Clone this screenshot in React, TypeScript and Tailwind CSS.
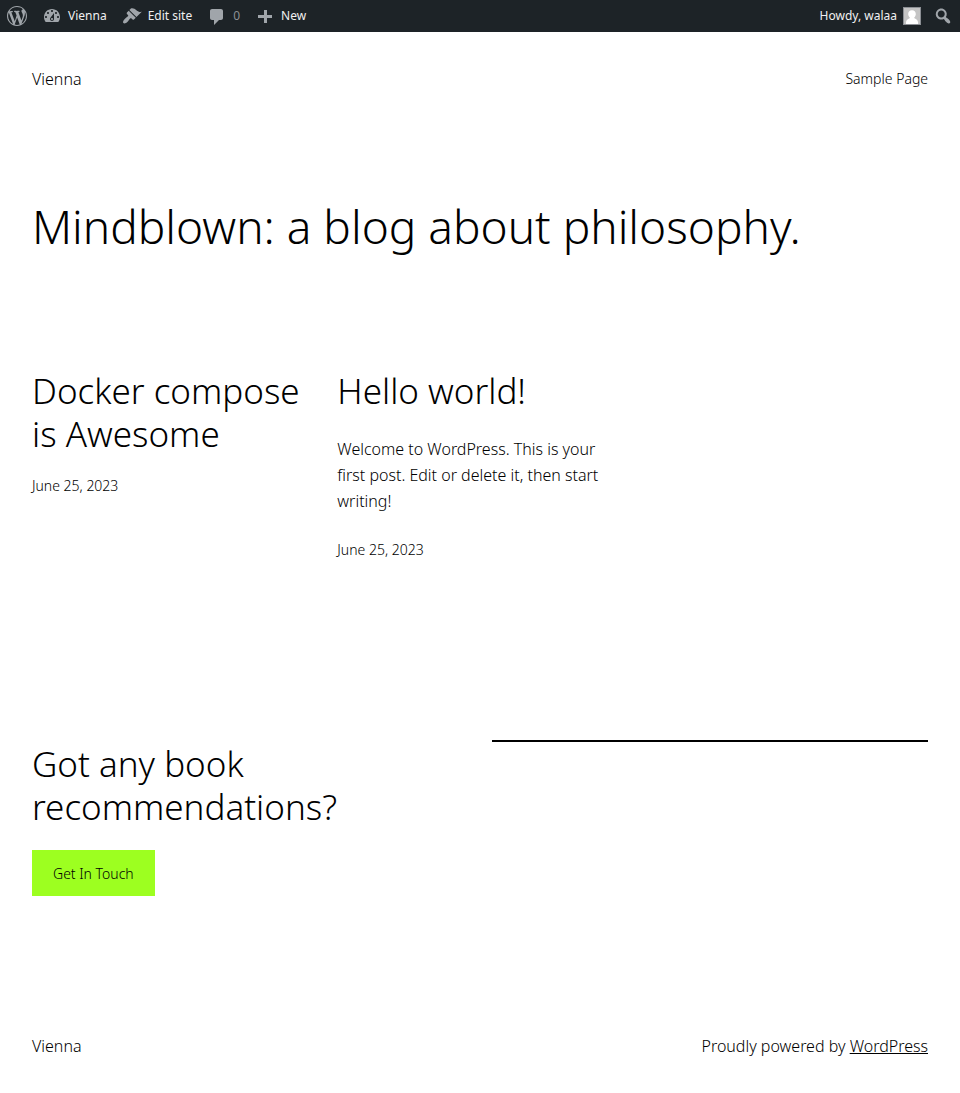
import type { ReactNode } from "react";

const icons = {
  wordpress:
    "M20 10c0-5.51-4.49-10-10-10C4.48 0 0 4.49 0 10c0 5.52 4.48 10 10 10 5.51 0 10-4.48 10-10zM7.78 15.37L4.37 6.22c.55-.02 1.17-.08 1.17-.08.5-.06.44-1.13-.06-1.11 0 0-1.45.11-2.37.11-.18 0-.37 0-.58-.01C4.12 2.69 6.87 1.11 10 1.11c2.33 0 4.45.87 6.05 2.34-.68-.11-1.65.39-1.65 1.58 0 .74.45 1.36.9 2.1.35.61.55 1.36.55 2.46 0 1.49-1.4 5-1.4 5l-3.03-8.37c.54-.02.82-.17.82-.17.5-.05.44-1.25-.06-1.22 0 0-1.44.12-2.38.12-.87 0-2.33-.12-2.33-.12-.5-.03-.56 1.2-.06 1.22l.92.08 1.26 3.41zM17.41 10c.24-.64.74-1.87.43-4.25.7 1.29 1.05 2.71 1.05 4.25 0 3.29-1.73 6.24-4.4 7.78.97-2.59 1.94-5.2 2.92-7.78zM6.1 18.09C3.12 16.65 1.11 13.53 1.11 10c0-1.3.23-2.48.72-3.59C3.25 10.3 4.67 14.2 6.1 18.09zm4.03-6.63l2.58 6.98c-.86.29-1.76.45-2.71.45-.79 0-1.57-.11-2.29-.33.81-2.38 1.62-4.74 2.42-7.1z",
  dashboard:
    "M3.76 16h12.48c1.1-1.37 1.76-3.11 1.76-5 0-4.42-3.58-8-8-8s-8 3.58-8 8c0 1.89.66 3.63 1.76 5zM10 4c.55 0 1 .45 1 1s-.45 1-1 1-1-.45-1-1 .45-1 1-1zM6 6c.55 0 1 .45 1 1s-.45 1-1 1-1-.45-1-1 .45-1 1-1zm8 0c.55 0 1 .45 1 1s-.45 1-1 1-1-.45-1-1 .45-1 1-1zm-5.37 5.55L12 7v6c0 1.1-.9 2-2 2s-2-.9-2-2c0-.57.24-1.08.63-1.45zM4 10c.55 0 1 .45 1 1s-.45 1-1 1-1-.45-1-1 .45-1 1-1zm12 0c.55 0 1 .45 1 1s-.45 1-1 1-1-.45-1-1 .45-1 1-1zm-5 3c0-.55-.45-1-1-1s-1 .45-1 1 .45 1 1 1 1-.45 1-1z",
  brush:
    "M14.48 11.06L7.41 3.99l1.5-1.5c.5-.56 2.3-.47 3.51.32 1.21.8 1.43 1.28 2.91 2.1 1.18.64 2.45 1.26 4.45.85zm-.71.71L6.7 4.7 4.93 6.47c-.39.39-.39 1.02 0 1.41l1.06 1.06c.39.39.39 1.03 0 1.42-.6.6-1.43 1.11-2.21 1.69-.35.26-.7.53-1.01.84C1.43 14.23.4 16.08 1.4 17.07c.99 1 2.84-.03 4.18-1.36.31-.31.58-.66.85-1.02.57-.78 1.08-1.61 1.69-2.21.39-.39 1.02-.39 1.41 0l1.06 1.06c.39.39 1.02.39 1.41 0z",
  comment:
    "M5 3h9c1.1 0 2 .9 2 2v7c0 1.1-.9 2-2 2h-2l-5 5v-5H5c-1.1 0-2-.9-2-2V5c0-1.1.9-2 2-2z",
  plus: "M17 9v3h-5v5H9v-5H3V9h6V4h3v5h5z",
  search:
    "M12.14 4.18c1.87 1.87 2.11 4.75.72 6.89.12.1.22.21.36.31.2.16.47.36.81.59.34.24.56.39.66.47.42.31.73.57.94.78.32.32.6.65.84 1 .25.35.44.69.59 1.04.14.35.21.68.18 1-.02.32-.14.59-.36.81s-.49.34-.81.36c-.31.02-.65-.04-.99-.19-.35-.14-.7-.34-1.04-.59-.35-.24-.68-.52-1-.84-.21-.21-.47-.52-.77-.93-.1-.13-.25-.35-.47-.66-.22-.32-.4-.57-.56-.78-.16-.2-.29-.35-.44-.5-2.07 1.09-4.69.76-6.44-.98-2.14-2.15-2.14-5.64 0-7.78 2.15-2.15 5.63-2.15 7.78 0zm-1.41 6.36c1.36-1.37 1.36-3.58 0-4.95-1.37-1.37-3.59-1.37-4.95 0-1.37 1.37-1.37 3.58 0 4.95 1.36 1.37 3.58 1.37 4.95 0z",
};

function Icon({ name }: { name: keyof typeof icons }) {
  return (
    <svg viewBox="0 0 20 20" className="size-5 shrink-0 fill-[#a0a5aa]" aria-hidden="true">
      <path d={icons[name]} />
    </svg>
  );
}

function BarLink({ icon, children }: { icon: keyof typeof icons; children: ReactNode }) {
  return (
    <a href="#" className="flex h-8 items-center gap-1.5">
      <Icon name={icon} />
      <span>{children}</span>
    </a>
  );
}

function AdminBar() {
  return (
    <nav
      aria-label="Toolbar"
      className="flex h-8 items-center justify-between bg-[#1d2327] px-[7px] text-[12px] font-normal text-[#f0f0f1]"
    >
      <div className="flex items-center gap-[15px]">
        <a href="#" aria-label="About WordPress">
          <Icon name="wordpress" />
        </a>
        <BarLink icon="dashboard">Vienna</BarLink>
        <BarLink icon="brush">Edit site</BarLink>
        <BarLink icon="comment">
          <span className="text-[#8c8f94]">0</span>
        </BarLink>
        <BarLink icon="plus">New</BarLink>
      </div>
      <div className="flex items-center gap-3">
        <a href="#" className="flex items-center gap-1.5">
          <span>Howdy, walaa</span>
          <svg viewBox="0 0 18 18" className="size-[18px]" aria-hidden="true">
            <rect width="18" height="18" fill="#8c8f94" />
            <rect x="1" y="1" width="16" height="16" fill="#c4c4c4" />
            <path
              d="M9 3.2c2.3 0 3.8 1.6 3.8 3.8 0 1.5-.7 2.9-1.7 3.7.3 1 3.9 1.2 4 5V17H3v-1.3c.1-3.8 3.7-4 4-5C5.9 9.9 5.2 8.5 5.2 7c0-2.2 1.5-3.8 3.8-3.8z"
              fill="#fff"
            />
          </svg>
        </a>
        <button type="button" aria-label="Search">
          <Icon name="search" />
        </button>
      </div>
    </nav>
  );
}

export default function App() {
  return (
    <div className="min-h-screen bg-white font-['Noto_Sans','Open_Sans',sans-serif] text-black">
      <AdminBar />
      <div className="px-8 text-[16px] leading-[26px] font-light">
        <header className="flex items-center justify-between pt-[33px]">
          <a href="#">Vienna</a>
          <nav aria-label="Pages">
            <a href="#" className="text-[14px]">
              Sample Page
            </a>
          </nav>
        </header>

        <main>
          <h1 className="pt-[106px] text-[46px] leading-[56px]">
            Mindblown: a blog about philosophy.
          </h1>

          <div className="mt-[115px] grid grid-cols-3 gap-5">
            <article>
              <h2 className="text-[35px] leading-[43px]">
                <a href="#">Docker compose is Awesome</a>
              </h2>
              <time dateTime="2023-06-25" className="mt-[18px] block text-[14px]">
                June 25, 2023
              </time>
            </article>
            <article>
              <h2 className="text-[35px] leading-[43px]">
                <a href="#">Hello world!</a>
              </h2>
              <p className="mt-6">
                Welcome to WordPress. This is your first post. Edit or delete it, then start
                writing!
              </p>
              <time dateTime="2023-06-25" className="mt-[23px] block text-[14px]">
                June 25, 2023
              </time>
            </article>
          </div>

          <section className="mt-[177px] grid grid-cols-2 gap-6">
            <div>
              <h2 className="mt-0.5 text-[35px] leading-[43px]">Got any book recommendations?</h2>
              <button
                type="button"
                className="mt-[22px] block bg-[#9dff20] px-[21px] pt-[11px] pb-[9px] text-[14px]"
              >
                Get In Touch
              </button>
            </div>
            <hr className="border-t-2 border-black" />
          </section>
        </main>

        <footer className="flex items-center justify-between pt-[137px] pb-[33px]">
          <a href="#">Vienna</a>
          <p>
            Proudly powered by{" "}
            <a href="#" className="underline">
              WordPress
            </a>
          </p>
        </footer>
      </div>
    </div>
  );
}
